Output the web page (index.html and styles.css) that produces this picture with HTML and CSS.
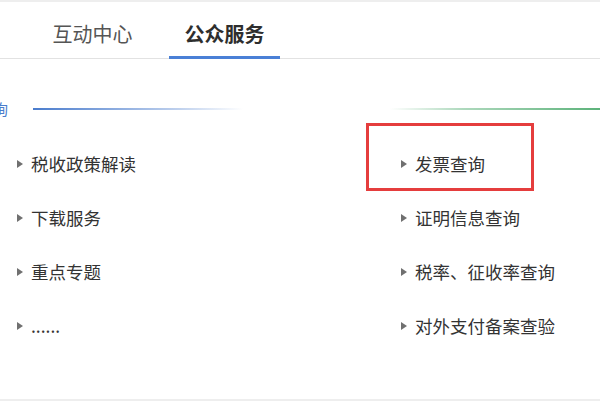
FILE: index.html
```html
<!DOCTYPE html>
<html lang="zh">
<head>
<meta charset="utf-8">
<link rel="stylesheet" href="styles.css">
</head>
<body>
<div class="topbar"></div>
<div class="tabs">
  <div class="tab">互动中心</div>
  <div class="tab active">公众服务</div>
</div>
<div class="section">
  <div class="head">
    <span class="title">查询</span>
    <span class="line blue"></span>
    <span class="spacer"></span>
    <span class="line green"></span>
  </div>
  <div class="grid">
    <div class="item"><span class="tri"></span>税收政策解读</div>
    <div class="item"><span class="tri"></span>发票查询</div>
    <div class="item"><span class="tri"></span>下载服务</div>
    <div class="item"><span class="tri"></span>证明信息查询</div>
    <div class="item"><span class="tri"></span>重点专题</div>
    <div class="item"><span class="tri"></span>税率、征收率查询</div>
    <div class="item"><span class="tri"></span>......</div>
    <div class="item"><span class="tri"></span>对外支付备案查验</div>
  </div>
  <div class="mark"></div>
</div>
<div class="bottombar"></div>
</body>
</html>
```

FILE: styles.css
```css
html, body {
  margin: 0;
  padding: 0;
  background: #ffffff;
  width: 600px;
  height: 401px;
  overflow: hidden;
  font-family: "Noto Sans CJK SC", "Noto Sans", sans-serif;
}
.topbar {
  height: 2px;
  background: #eeeeee;
}
.tabs {
  height: 56px;
  border-bottom: 1px solid #e2e2e2;
  display: flex;
  padding-left: 37px;
  gap: 21px;
}
.tab {
  width: 111px;
  margin-bottom: -1px;
  box-sizing: border-box;
  border-bottom: 3px solid transparent;
  display: flex;
  justify-content: center;
  align-items: center;
  padding-top: 9px;
  font-size: 20px;
  color: #555555;
}
.tab.active {
  border-bottom-color: #4a80d6;
  font-weight: bold;
  color: #2e2e2e;
}
.section {
  position: relative;
  box-sizing: border-box;
  height: 340px;
  padding-top: 41px;
}
.head {
  display: flex;
  align-items: center;
  height: 18px;
}
.title {
  margin-left: -22px;
  font-size: 15px;
  line-height: 18px;
  color: #4a7dcc;
  white-space: nowrap;
}
.line {
  width: 210px;
  height: 2px;
}
.line.blue {
  margin-left: 25px;
  background: linear-gradient(to right, #4a7ccd, rgba(74,124,205,0.35) 70%, rgba(74,124,205,0));
}
.spacer {
  flex: 1;
}
.line.green {
  background: linear-gradient(to right, rgba(92,178,122,0), rgba(92,178,122,0.5) 35%, #5cb27a);
}
.grid {
  margin-top: 18px;
  padding-left: 17px;
  display: grid;
  grid-template-columns: 384px 1fr;
  grid-auto-rows: 54px;
}
.item {
  display: flex;
  align-items: center;
  font-size: 17.5px;
  color: #333333;
  white-space: nowrap;
}
.tri {
  width: 0;
  height: 0;
  border-top: 4px solid transparent;
  border-bottom: 4px solid transparent;
  border-left: 6px solid #707070;
  margin-right: 8px;
  margin-top: 2px;
}
.mark {
  position: absolute;
  left: 366px;
  top: 64px;
  width: 168px;
  height: 68px;
  box-sizing: border-box;
  border: 3px solid #e53d3d;
}
.bottombar {
  height: 2px;
  background: #eeeeee;
}
```
